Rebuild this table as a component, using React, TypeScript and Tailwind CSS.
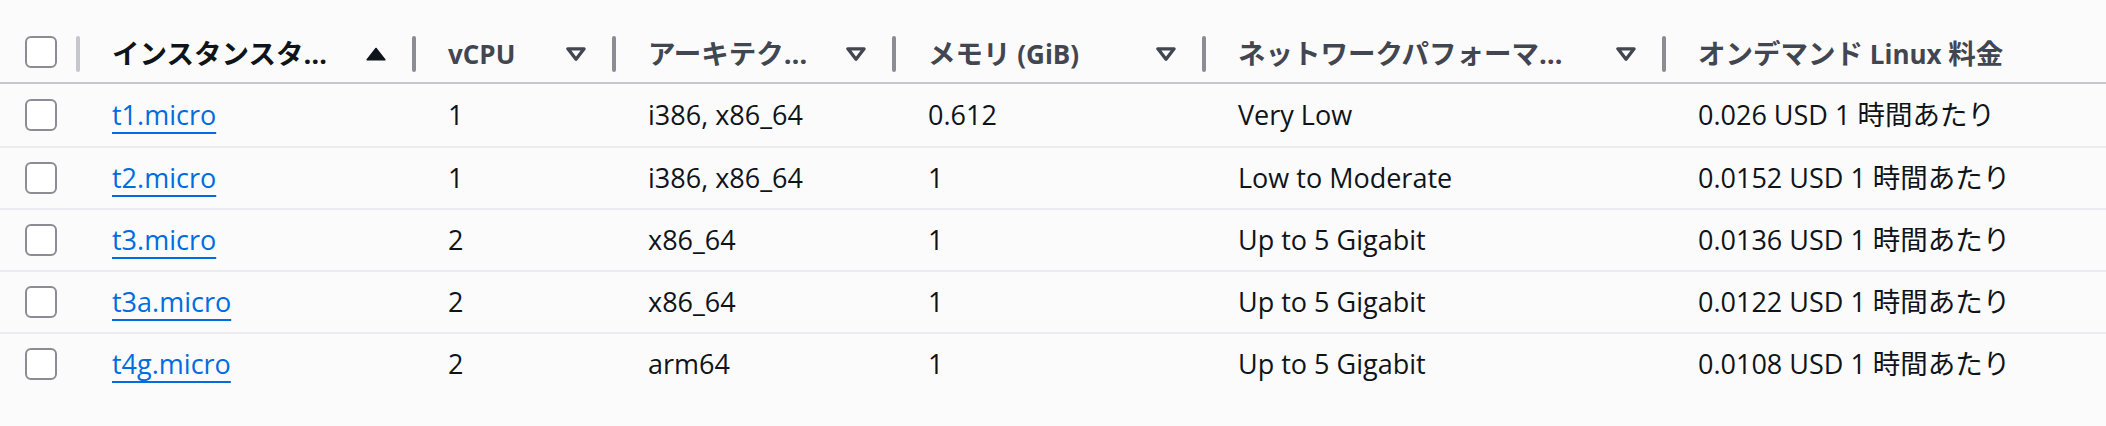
import type { ReactNode } from 'react'

type Row = { name: string; vcpu: string; arch: string; mem: string; net: string; price: string }

const rows: Row[] = [
  { name: 't1.micro', vcpu: '1', arch: 'i386, x86_64', mem: '0.612', net: 'Very Low', price: '0.026' },
  { name: 't2.micro', vcpu: '1', arch: 'i386, x86_64', mem: '1', net: 'Low to Moderate', price: '0.0152' },
  { name: 't3.micro', vcpu: '2', arch: 'x86_64', mem: '1', net: 'Up to 5 Gigabit', price: '0.0136' },
  { name: 't3a.micro', vcpu: '2', arch: 'x86_64', mem: '1', net: 'Up to 5 Gigabit', price: '0.0122' },
  { name: 't4g.micro', vcpu: '2', arch: 'arm64', mem: '1', net: 'Up to 5 Gigabit', price: '0.0108' },
]

const cols = 'grid grid-cols-[80px_336px_200px_280px_310px_460px_1fr]'

// japanese glyphs come out a touch larger than the latin ones in the shot
function J({ children }: { children: ReactNode }) {
  return <span className="text-[27.5px]">{children}</span>
}

function Checkbox() {
  return <div className="w-[32px] h-[32px] rounded-[6px] border-2 border-[#8c8c94] bg-white shrink-0" />
}

function SortAsc() {
  return (
    <svg width="20" height="14" viewBox="0 0 20 14">
      <path d="M10 1.5 L18.8 12.8 H1.2 Z" fill="#0f141a" stroke="#0f141a" strokeWidth="1.6" strokeLinejoin="round" />
    </svg>
  )
}

function SortNone() {
  return (
    <svg width="20" height="14" viewBox="0 0 20 14">
      <path d="M1.9 1.8 H18.1 L10 12.2 Z" fill="none" stroke="#424650" strokeWidth="3.3" strokeLinejoin="round" />
    </svg>
  )
}

function Head({ children, sorted, icon = true, last }: { children: ReactNode; sorted?: boolean; icon?: boolean; last?: boolean }) {
  return (
    <div className="flex items-center h-[36px] min-w-0">
      <div className={`flex-1 flex items-center justify-between pl-[32px] pr-[26px] min-w-0 whitespace-nowrap font-bold ${sorted ? 'text-[#0f141a]' : 'text-[#424650]'}`}>
        <span className="leading-[36px]">{children}</span>
        {icon && (sorted ? <SortAsc /> : <SortNone />)}
      </div>
      {!last && <div className="w-[4px] h-[36px] rounded-full bg-[#8c8c94] shrink-0" />}
    </div>
  )
}

export default function App() {
  return (
    <div className="w-[2106px] h-[426px] bg-[#fbfbfb] text-[26px] text-[#0f141a] font-['Open_Sans','Noto_Sans_CJK_JP',sans-serif] overflow-hidden">
      <div className={`${cols} h-[84px] items-end pb-[10px] border-b-2 border-[#c6c6cd]`}>
        <div className="flex items-start h-[36px] pl-[25px]">
          <Checkbox />
          <div className="flex-1" />
          <div className="w-[4px] h-[36px] rounded-full bg-[#c6c6cd]" />
        </div>
        <Head sorted><J>インスタンスタ…</J></Head>
        <Head>vCPU</Head>
        <Head><J>アーキテク…</J></Head>
        <Head><J>メモリ</J> (GiB)</Head>
        <Head><J>ネットワークパフォーマ…</J></Head>
        <Head icon={false} last><J>オンデマンド</J> Linux <J>料金</J></Head>
      </div>
      {rows.map((r, i) => (
        <div key={r.name} className={`${cols} h-[62px] items-center whitespace-nowrap text-[27px] ${i > 0 ? 'border-t-2 border-[#ebebf0]' : ''}`}>
          <div className="pl-[25px]"><Checkbox /></div>
          <div className="pl-[32px]">
            <a href="#" className="text-[#006ce0] underline decoration-2 underline-offset-[7px]">{r.name}</a>
          </div>
          <div className="pl-[32px]">{r.vcpu}</div>
          <div className="pl-[32px]">{r.arch}</div>
          <div className="pl-[32px]">{r.mem}</div>
          <div className="pl-[32px]">{r.net}</div>
          <div className="pl-[32px]">{r.price} USD 1 <J>時間あたり</J></div>
        </div>
      ))}
    </div>
  )
}
